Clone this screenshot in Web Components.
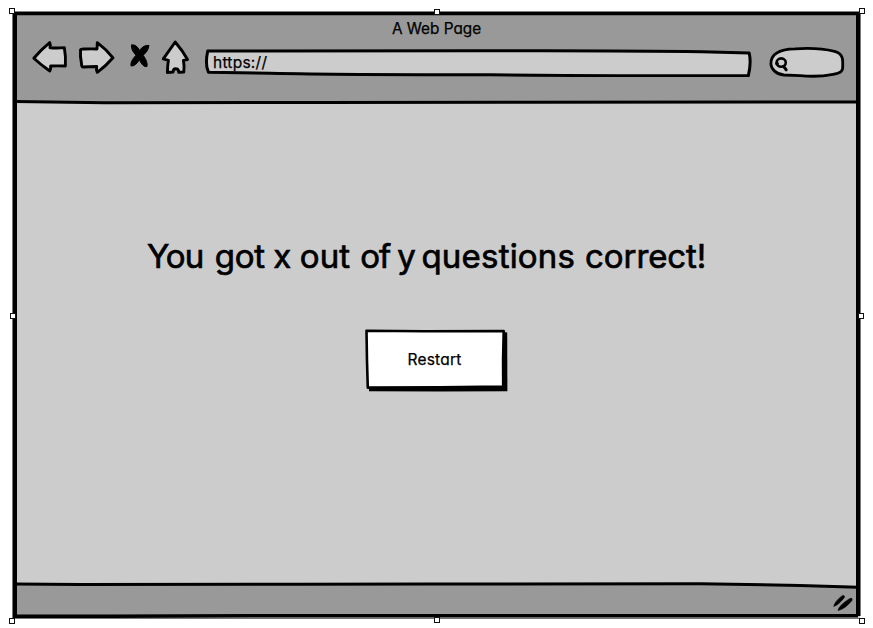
<!DOCTYPE html>
<html lang="en">
<head>
<meta charset="utf-8">
<title>A Web Page</title>
<style>
body{margin:0;background:#fff;color:#000;font-family:Inter,"Noto Sans",sans-serif;font-feature-settings:"cv11" 1;overflow:hidden}
/* hand-lettered spacing, tuned word by word */
sketch-result span{letter-spacing:var(--ls,0);margin-left:var(--ml,0)}
</style>
</head>
<body>
<sketch-window>
  <sketch-toolbar slot="header" page-title="A Web Page" url="https://"></sketch-toolbar>
  <sketch-result><span style="--ls:-1px">You</span> <span style="--ml:2.4px;--ls:-.3px">got</span> <span style="--ml:-.8px">x</span> <span style="--ml:-.8px;--ls:.1px">out</span> <span style="--ml:.8px;--ls:-1px">of</span> <span style="--ml:-2.4px">y</span> <span style="--ml:-3.5px;--ls:.2px">questions</span> <span style="--ml:.7px;--ls:-.1px">correct!</span>
    <sketch-button slot="action">Restart</sketch-button>
  </sketch-result>
</sketch-window>
<script>
const define = (name, html) => customElements.define(name, class extends HTMLElement {
  constructor() {
    super();
    this.attachShadow({mode: 'open'}).innerHTML = html;
  }
  connectedCallback() {
    this.shadowRoot.querySelectorAll('[data-attr]').forEach(e => {
      e.textContent = this.getAttribute(e.dataset.attr);
    });
  }
});

define('sketch-icon-bar', `
<style>:host{display:block;width:168px;height:44px}svg{display:block}</style>
<svg width="168" height="44" viewBox="28 36 168 44" fill="#ccc" stroke="#000" stroke-width="2.9" stroke-linejoin="round" stroke-linecap="round">
<path d="M33.8 58.2Q41 49.6 49.7 42.6Q50.8 45 50 47.7Q57.5 48.4 64.3 47.6Q66 56.5 65.4 66Q58 65.8 50.6 66Q51 69 49.8 71Q41 64.8 33.8 58.2Z"/>
<path d="M80.5 50Q81 48.8 84.5 49Q91 48.7 97 49Q97.2 45.5 97.3 42.6Q106.5 49.5 113 57.8Q106 66 97.3 72.3Q96 69.5 96.7 66.5Q89 66.5 83 67Q81.5 66.7 81.5 63.5Q80 56 80.5 50Z"/>
<path fill="#000" stroke-width="1" d="M131.8 45Q136 43.8 139.7 50.5Q143 45 149 45.4Q148.8 50.8 143.2 55.3Q148 62 147 66.5Q142.8 67.5 139.4 59.7Q135.8 66.2 131 66Q130 61.5 136 55.2Q130.3 49.3 131.8 45Z"/>
<path d="M163.3 58.8Q169.5 50 175.2 42Q182.5 50.5 187.5 59.5L183.4 60.3Q184.6 66.5 183.8 72L178.8 72.3Q178.5 68.8 176 68.8Q173.4 68.6 173 72L167.4 72.5Q167.5 66 168.4 60.3Z"/>
</svg>`);

define('sketch-address', `
<style>
:host{display:grid;width:548px;height:28px}
svg,div{grid-area:1/1}
div{font-size:15.5px;line-height:20px;padding:4px 0 0 9px;letter-spacing:.25px;-webkit-text-stroke:.25px #000}
</style>
<svg width="548" height="28" viewBox="204 49 548 28" fill="#ccc" stroke="#000" stroke-width="3" stroke-linejoin="round"><path d="M207.7 51Q340 51.5 480 50.8Q620 50.4 702 51.7L749.2 53Q751.5 63 748.3 75.8Q640 76 490 74.8Q340 74.8 270 73.3L208.5 72.3Q204.8 65 207.7 51Z"/></svg>
<div><slot></slot></div>`);

define('sketch-search', `
<style>:host{display:block;width:80px;height:34px}svg{display:block}</style>
<svg width="80" height="34" viewBox="767 45 80 34" fill="#ccc" stroke="#000" stroke-width="2.8" stroke-linecap="round" stroke-linejoin="round">
<path d="M770.9 64C770.7 53.5 780 49.2 795 48.9Q817 47.2 834.5 51.3C843 53.5 843 59 842.7 66.5C843.2 71.5 840 73 833 74.3Q818 77.4 800 75.6L784 75C776 74.4 771.2 69 770.9 64Z"/>
<ellipse cx="781.2" cy="62.6" rx="4.6" ry="4.2" stroke-width="2.6"/><path fill="none" stroke-width="3" d="M776.6 63.4H777.4M783.6 66.4L786.2 69.8"/></svg>`);

define('sketch-toolbar', `
<style>
:host{display:block;height:90px}
.title{height:23px;padding-top:4px;line-height:23px;font-size:15.3px;text-align:center;box-sizing:border-box;-webkit-text-stroke:.25px #000}
.row{display:flex;align-items:flex-start;padding:11px 0 0 11px}
sketch-address{margin:2px 0 0 8px}
sketch-search{margin:-2px 0 0 15px}
sketch-icon-bar{margin-top:-11px}
</style>
<div class="title" data-attr="page-title"></div>
<div class="row"><sketch-icon-bar></sketch-icon-bar><sketch-address><span data-attr="url">https://</span></sketch-address><sketch-search></sketch-search></div>`);

define('sketch-button', `
<style>
:host{display:grid;width:144px;height:64px;font-size:15.5px;line-height:20px;letter-spacing:.2px}
svg,div{grid-area:1/1}
div{padding:22px 5px 0 0;text-align:center;-webkit-text-stroke:.25px #000}
</style>
<svg width="144" height="64" viewBox="365 328 144 64"><path d="M369.3 334L503.6 332L507.2 332.5L507.4 391.2L440 391.6L369 391.3Z"/><path fill="#fff" stroke="#000" stroke-width="2.6" stroke-linejoin="round" d="M366.5 330.7L425 331.3L503.7 331Q502.7 360 503.2 386.6L440 387.3L367.8 387.6Q366.8 360 366.5 330.7Z"/></svg>
<div><slot></slot></div>`);

define('sketch-result', `
<style>
:host{display:flex;flex-direction:column;height:481px}
.message{margin:131px 0 0 130px;font-size:33px;line-height:44px;height:44px;white-space:nowrap;-webkit-text-stroke:.7px #000}
.action{margin:50px 0 0 348px}
</style>
<div class="message"><slot></slot></div>
<div class="action"><slot name="action"></slot></div>`);

define('sketch-window', `
<style>
:host{display:grid;width:873px;height:628px;grid-template-columns:17px 839px 17px;grid-template-rows:13px 90px 481px 44px}
svg{grid-area:1/1/-1/-1}
.head{grid-area:2/2}.body{grid-area:3/2}
</style>
<svg width="873" height="628" viewBox="0 0 873 628">
<rect x="13" y="12" width="847" height="606" fill="#ccc"/>
<path fill="#999" d="M15 13H858V102H15ZM15 584L700 584L858 587V616H15Z"/>
<g fill="none" stroke="#000">
<path stroke="#777" stroke-width="1" d="M12.5 12V618M860.5 12V616M14 618.5L300 618.5H860"/>
<path stroke-width="4" d="M15 12V618M858 12V616"/>
<path stroke-width="3.6" d="M13 13.4H860"/>
<path stroke-width="3" d="M15 101.5L105 102.7L320 102.5L530 102.3L780 102H858M15 584L80 584.6L300 584.3L430 584L700 583.8L800 585.4L858 587.2"/>
<path stroke-width="3.6" d="M14 616.2H110L250 615.8H858"/>
</g>
<path d="M833.8 606.5Q834.4 601.5 842.6 595.4Q845.6 595.4 844 598Q838.5 605 833.8 606.5ZM838 610.6Q838.6 605.5 850 598.4Q853 597.7 852 600.4Q845 609 838 610.6Z" stroke="#000" stroke-width=".6"/>
<g fill="#fff" stroke="#111" stroke-width="1">
<rect x="9.5" y="8.5" width="5" height="5"/><rect x="434.5" y="9.5" width="5" height="5"/><rect x="859.5" y="8.5" width="5" height="5"/>
<rect x="10.5" y="313.5" width="5" height="5"/><rect x="858.5" y="313.5" width="5" height="5"/>
<rect x="9.5" y="618.5" width="5" height="5"/><rect x="434.5" y="617.5" width="5" height="5"/><rect x="859.5" y="618.5" width="5" height="5"/>
</g>
</svg>
<div class="head"><slot name="header"></slot></div>
<div class="body"><slot></slot></div>`);
</script>
</body>
</html>
